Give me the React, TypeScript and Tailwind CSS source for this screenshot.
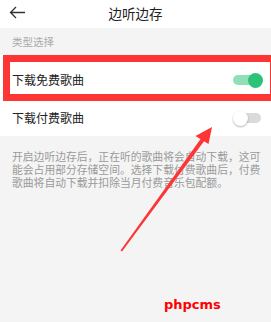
export default function App() {
  const font = { fontFamily: '"Noto Sans CJK SC", "Liberation Sans", sans-serif' };

  return (
    <div
      className="relative h-[322px] w-[271px] overflow-hidden bg-[#f4f4f4]"
      style={font}
    >
      {/* header */}
      <div className="relative flex h-[28px] items-center justify-center bg-white">
        <svg
          className="absolute left-[9px] top-[6px]"
          width="17"
          height="13"
          viewBox="0 0 17 13"
          fill="none"
        >
          <path d="M16 6.5H1.5M7 1L1.5 6.5L7 12" stroke="#333" strokeWidth="1.3" />
        </svg>
        <span className="text-[13.5px] leading-none text-[#222]">边听边存</span>
      </div>

      {/* section label */}
      <div className="flex h-[27px] items-center pl-3 text-[10.5px] text-[#aaa]">
        类型选择
      </div>

      {/* options */}
      <div className="bg-white">
        <div className="flex h-[45px] items-center justify-between pl-3 pr-[8px] pt-[5px]">
          <span className="text-[12px] text-[#222]">下载免费歌曲</span>
          <div className="relative flex h-[16px] w-[30px] items-center">
            <div className="h-[10px] w-[28px] rounded-full bg-[#8fe0b6]" />
            <div className="absolute right-0 h-[15px] w-[15px] rounded-full bg-[#2dc27a]" />
          </div>
        </div>
        <div className="flex h-[36px] items-center justify-between pl-3 pr-[10px]">
          <span className="text-[12px] text-[#222]">下载付费歌曲</span>
          <div className="relative flex h-[16px] w-[28px] items-center justify-end">
            <div className="h-[10px] w-[25px] rounded-full bg-[#dadada]" />
            <div className="absolute left-0 h-[15px] w-[15px] rounded-full bg-white shadow-[0_1px_2px_rgba(0,0,0,0.3)]" />
          </div>
        </div>
      </div>

      {/* description */}
      <p className="pl-3 pr-[10px] pt-[14px] text-[10.8px] leading-[13px] text-[#9a9a9a]">
        开启边听边存后，正在听的歌曲将会自动下载，这可能会占用部分存储空间。选择下载付费歌曲后，付费歌曲将自动下载并扣除当月付费音乐包配额。
      </p>

      {/* annotation box */}
      <div className="pointer-events-none absolute left-[3px] top-[55px] h-[46px] w-[272px] border-[7px] border-r-[5px] border-[#fd3535]" />

      {/* annotation arrow */}
      <svg className="pointer-events-none absolute left-0 top-0" width="271" height="322">
        <polygon
          points="120.5,250.5 201.5,137.8 204.8,140.2 122,251.5"
          fill="#fd3535"
        />
        <polygon points="212,127 195.5,136 208.5,144" fill="#fd3535" />
      </svg>

      {/* watermark */}
      <div
        className="absolute left-[164px] top-[298px] text-[13px] font-bold leading-none text-[#ff0000]"
        style={{ fontFamily: '"DejaVu Sans", sans-serif', WebkitFontSmoothing: "none" }}
      >
        phpcms
      </div>
    </div>
  );
}
